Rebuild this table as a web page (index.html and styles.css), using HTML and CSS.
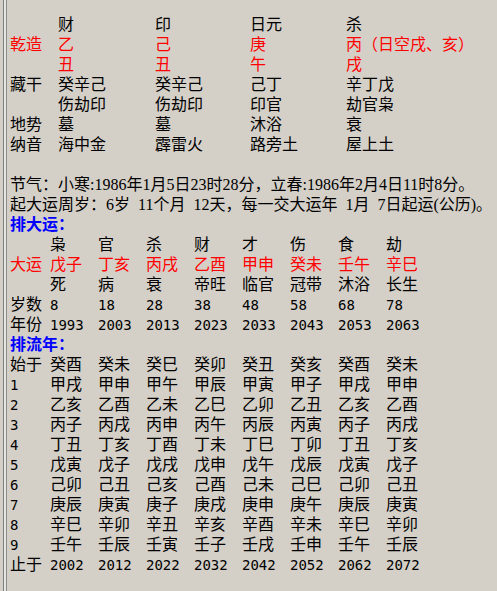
FILE: index.html
```html
<!DOCTYPE html>
<html lang="zh">
<head>
<meta charset="utf-8">
<title>排盘</title>
<link rel="stylesheet" href="styles.css">
</head>
<body>
<div class="page">
  <div class="pillars">
    <span></span><span>财</span><span>印</span><span>日元</span><span>杀</span>
    <span class="red">乾造</span><span class="red">乙</span><span class="red">己</span><span class="red">庚</span><span class="red">丙（日空戌、亥）</span>
    <span></span><span class="red">丑</span><span class="red">丑</span><span class="red">午</span><span class="red">戌</span>
    <span>藏干</span><span>癸辛己</span><span>癸辛己</span><span>己丁</span><span>辛丁戊</span>
    <span></span><span>伤劫印</span><span>伤劫印</span><span>印官</span><span>劫官枭</span>
    <span>地势</span><span>墓</span><span>墓</span><span>沐浴</span><span>衰</span>
    <span>纳音</span><span>海中金</span><span>霹雷火</span><span>路旁土</span><span>屋上土</span>
  </div>

  <p class="line gap">节气：小寒:1986年1月5日23时28分，立春:1986年2月4日11时8分。</p>
  <p class="line wide">起大运周岁：6岁 11个月 12天，每一交大运年 1月 7日起运(公历)。</p>
  <p class="heading">排大运：</p>

  <div class="table">
    <span></span><span>枭</span><span>官</span><span>杀</span><span>财</span><span>才</span><span>伤</span><span>食</span><span>劫</span>
    <span class="red">大运</span><span class="red">戊子</span><span class="red">丁亥</span><span class="red">丙戌</span><span class="red">乙酉</span><span class="red">甲申</span><span class="red">癸未</span><span class="red">壬午</span><span class="red">辛巳</span>
    <span></span><span>死</span><span>病</span><span>衰</span><span>帝旺</span><span>临官</span><span>冠带</span><span>沐浴</span><span>长生</span>
    <span>岁数</span><span class="num">8</span><span class="num">18</span><span class="num">28</span><span class="num">38</span><span class="num">48</span><span class="num">58</span><span class="num">68</span><span class="num">78</span>
    <span>年份</span><span class="num">1993</span><span class="num">2003</span><span class="num">2013</span><span class="num">2023</span><span class="num">2033</span><span class="num">2043</span><span class="num">2053</span><span class="num">2063</span>
  </div>

  <p class="heading">排流年：</p>

  <div class="table">
    <span>始于</span><span>癸酉</span><span>癸未</span><span>癸巳</span><span>癸卯</span><span>癸丑</span><span>癸亥</span><span>癸酉</span><span>癸未</span>
    <span class="num">1</span><span>甲戌</span><span>甲申</span><span>甲午</span><span>甲辰</span><span>甲寅</span><span>甲子</span><span>甲戌</span><span>甲申</span>
    <span class="num">2</span><span>乙亥</span><span>乙酉</span><span>乙未</span><span>乙巳</span><span>乙卯</span><span>乙丑</span><span>乙亥</span><span>乙酉</span>
    <span class="num">3</span><span>丙子</span><span>丙戌</span><span>丙申</span><span>丙午</span><span>丙辰</span><span>丙寅</span><span>丙子</span><span>丙戌</span>
    <span class="num">4</span><span>丁丑</span><span>丁亥</span><span>丁酉</span><span>丁未</span><span>丁巳</span><span>丁卯</span><span>丁丑</span><span>丁亥</span>
    <span class="num">5</span><span>戊寅</span><span>戊子</span><span>戊戌</span><span>戊申</span><span>戊午</span><span>戊辰</span><span>戊寅</span><span>戊子</span>
    <span class="num">6</span><span>己卯</span><span>己丑</span><span>己亥</span><span>己酉</span><span>己未</span><span>己巳</span><span>己卯</span><span>己丑</span>
    <span class="num">7</span><span>庚辰</span><span>庚寅</span><span>庚子</span><span>庚戌</span><span>庚申</span><span>庚午</span><span>庚辰</span><span>庚寅</span>
    <span class="num">8</span><span>辛巳</span><span>辛卯</span><span>辛丑</span><span>辛亥</span><span>辛酉</span><span>辛未</span><span>辛巳</span><span>辛卯</span>
    <span class="num">9</span><span>壬午</span><span>壬辰</span><span>壬寅</span><span>壬子</span><span>壬戌</span><span>壬申</span><span>壬午</span><span>壬辰</span>
    <span>止于</span><span class="num">2002</span><span class="num">2012</span><span class="num">2022</span><span class="num">2032</span><span class="num">2042</span><span class="num">2052</span><span class="num">2062</span><span class="num">2072</span>
  </div>
</div>
</body>
</html>
```

FILE: styles.css
```css
html, body {
  margin: 0;
  padding: 0;
}
body {
  width: 497px;
  height: 591px;
  overflow: hidden;
  background-color: #d4d0c8;
  background-image: linear-gradient(to right,
    #d4d0c8 0, #d4d0c8 3px,
    #808080 3px, #808080 4px,
    #e6e4df 4px, #e6e4df 6px,
    #8c8c8c 6px, #8c8c8c 7px,
    #d4d0c8 7px);
  background-repeat: no-repeat;
  background-size: 8px 100%;
  color: #000;
  font-family: "Liberation Sans", "Noto Sans CJK SC", sans-serif;
  font-size: 16px;
  line-height: 20px;
}
.page {
  padding: 15px 0 0 10px;
}
.pillars {
  display: grid;
  grid-template-columns: 48px 97px 95px 96px auto;
}
.pillars span,
.table span {
  height: 20px;
  white-space: nowrap;
}
.table {
  display: grid;
  grid-template-columns: 40px repeat(8, 48px);
}
.red {
  color: #ff0000;
}
.num {
  font-family: "DejaVu Sans Mono", monospace;
  font-size: 14px;
}
.line {
  margin: 0;
  height: 20px;
  white-space: nowrap;
  font-family: "Liberation Serif", "Noto Sans CJK SC", serif;
}
.wide {
  word-spacing: 4px;
}
.gap {
  margin-top: 20px;
}
.heading {
  margin: 0;
  height: 20px;
  color: #0000ff;
  font-weight: bold;
}
```
